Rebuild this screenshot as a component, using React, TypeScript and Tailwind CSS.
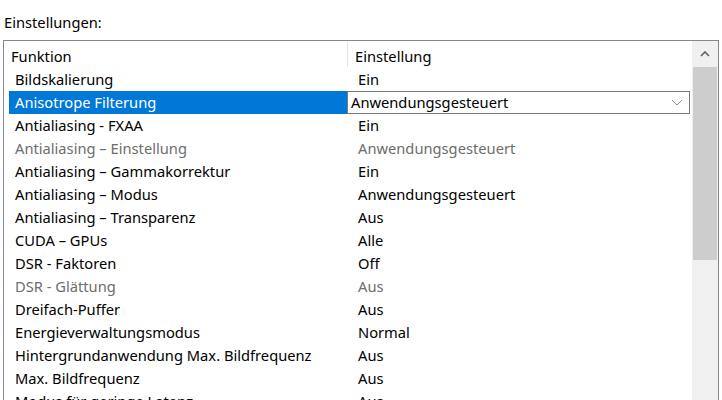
import React from 'react'

const rows: { name: string; value: string; disabled?: boolean; selected?: boolean }[] = [
  { name: 'Bildskalierung', value: 'Ein' },
  { name: 'Anisotrope Filterung', value: 'Anwendungsgesteuert', selected: true },
  { name: 'Antialiasing - FXAA', value: 'Ein' },
  { name: 'Antialiasing – Einstellung', value: 'Anwendungsgesteuert', disabled: true },
  { name: 'Antialiasing – Gammakorrektur', value: 'Ein' },
  { name: 'Antialiasing – Modus', value: 'Anwendungsgesteuert' },
  { name: 'Antialiasing – Transparenz', value: 'Aus' },
  { name: 'CUDA – GPUs', value: 'Alle' },
  { name: 'DSR - Faktoren', value: 'Off' },
  { name: 'DSR - Glättung', value: 'Aus', disabled: true },
  { name: 'Dreifach-Puffer', value: 'Aus' },
  { name: 'Energieverwaltungsmodus', value: 'Normal' },
  { name: 'Hintergrundanwendung Max. Bildfrequenz', value: 'Aus' },
  { name: 'Max. Bildfrequenz', value: 'Aus' },
  { name: 'Modus für geringe Latenz', value: 'Aus' },
]

export default function App() {
  return (
    <div
      className="w-[722px] h-[400px] overflow-hidden bg-white text-[14.7px] text-black"
      style={{ fontFamily: '"Noto Sans", "Open Sans", sans-serif' }}
    >
      <div className="h-[40px] pl-[4px] pt-[11px] leading-[22px]">Einstellungen:</div>

      <div className="ml-[3px] w-[716px] h-[400px] border border-[#828790] flex">
        <div className="flex-1 flex flex-col">
          {/* Header */}
          <div className="h-[27px] flex items-center">
            <div className="w-[343px] pl-[7px] pt-[3px] leading-[24px]">Funktion</div>
            <div className="w-px h-[25px] bg-[#e5e5e5]" />
            <div className="flex-1 pl-[7px] pt-[3px] leading-[24px]">Einstellung</div>
          </div>

          {/* Rows */}
          <div className="pl-[5px]">
            {rows.map((r) => (
              <div key={r.name} className="h-[23px] flex">
                <div
                  className={
                    'w-[338px] pl-[6px] leading-[23px] whitespace-nowrap ' +
                    (r.selected ? 'bg-[#0078d7] text-white' : r.disabled ? 'text-[#6d6d6d]' : '')
                  }
                >
                  {r.name}
                </div>
                {r.selected ? (
                  <div className="w-[343px] h-[23px] border border-[#7a7a7a] flex items-center justify-between pl-[3px] pr-[6px]">
                    <span className="leading-[21px]">{r.value}</span>
                    <svg width="12" height="7" viewBox="0 0 12 7">
                      <path d="M1 1 L6 6 L11 1" fill="none" stroke="#8a8a8a" strokeWidth="1" />
                    </svg>
                  </div>
                ) : (
                  <div className={'flex-1 pl-[11px] leading-[23px] ' + (r.disabled ? 'text-[#6d6d6d]' : '')}>
                    {r.value}
                  </div>
                )}
              </div>
            ))}
          </div>
        </div>

        {/* Scrollbar */}
        <div className="w-[26px] bg-[#f0f0f0] flex flex-col">
          <div className="h-[26px] flex items-center justify-center">
            <svg width="10" height="6" viewBox="0 0 10 6">
              <path d="M1 5 L5 1 L9 5" fill="none" stroke="#606060" strokeWidth="1.6" />
            </svg>
          </div>
          <div className="mx-[1px] h-[193px] bg-[#cdcdcd]" />
        </div>
      </div>
    </div>
  )
}
